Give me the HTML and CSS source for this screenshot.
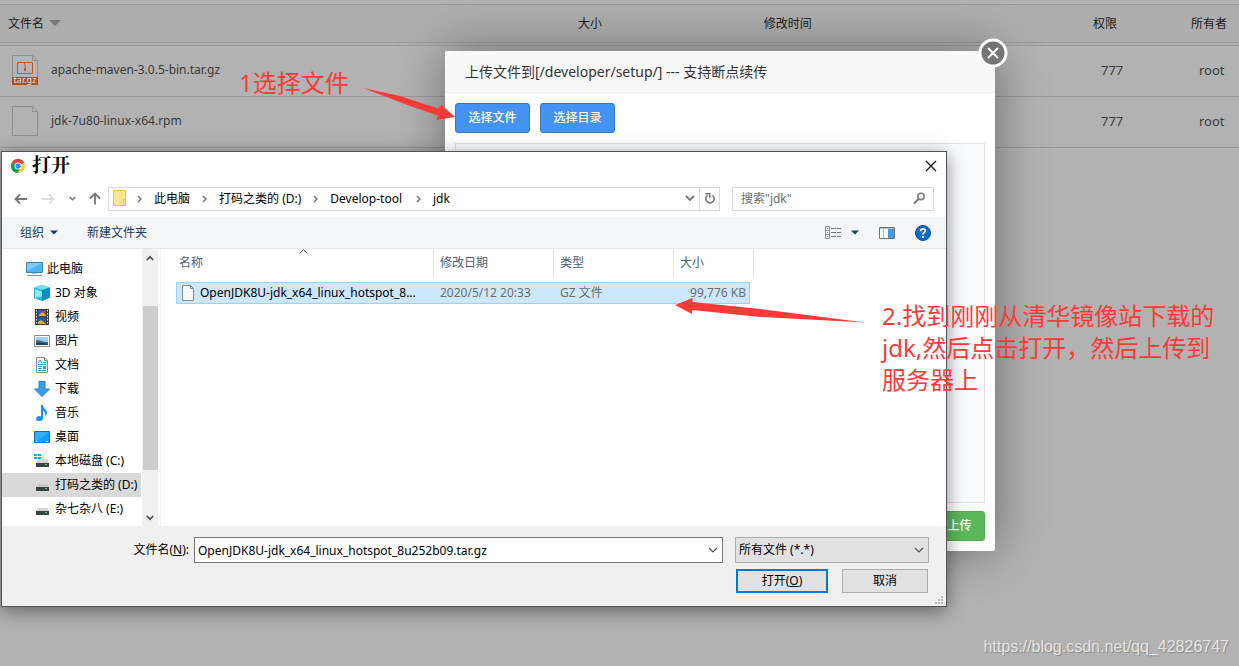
FILE: index.html
```html
<!DOCTYPE html>
<html lang="zh-CN">
<head>
<meta charset="utf-8">
<title>上传文件</title>
<link rel="stylesheet" href="styles.css">
</head>
<body>
<main class="page">
  <table class="files">
    <colgroup><col class="c-name"><col class="c-size"><col><col class="c-perm"><col class="c-owner"></colgroup>
    <thead>
      <tr><th>文件名<svg class="caret" width="12" height="6" viewBox="0 0 12 6"><path d="M0 0h12L6 6z" fill="#777"/></svg></th><th>大小</th><th>修改时间</th><th>权限</th><th>所有者</th></tr>
      <tr class="rule"><td colspan="5"></td></tr>
    </thead>
    <tbody>
      <tr>
        <td><div class="file">
          <svg width="28" height="31" viewBox="0 0 28 31"><path d="M1.500.5h20l5 5v24h-25z" fill="#b5b5b5" stroke="#8f8f8f"/><path d="M21.500.5v5h5" fill="none" stroke="#8f8f8f"/><path d="M6.500 7.500h15v11h-15z" fill="none" stroke="#b65a2c"/><path d="M13 8h1v2h-1zM14 10h1v1h-1zM13 11h1v1h-1zM14 12h1v1h-1zM13 13h2v3h-2z" fill="#b65a2c"/><path d="M1 22h26v8H1z" fill="#ab4f1c"/><text x="14" y="28" text-anchor="middle" fill="#f0e4dc" class="ext">tar.gz</text></svg>
          <span>apache-maven-3.0.5-bin.tar.gz</span></div></td>
        <td></td><td></td><td>777</td><td>root</td>
      </tr>
      <tr>
        <td><div class="file">
          <svg width="28" height="31" viewBox="0 0 28 31"><path d="M1.500.5h20l5 5v24h-25z" fill="#b2b2b2" stroke="#8f8f8f"/><path d="M21.500.5v5h5" fill="none" stroke="#8f8f8f"/></svg>
          <span>jdk-7u80-linux-x64.rpm</span></div></td>
        <td></td><td></td><td>777</td><td>root</td>
      </tr>
    </tbody>
  </table>

  <section class="modal" aria-label="上传文件">
    <header class="modal-title">上传文件到[/developer/setup/] --- 支持断点续传</header>
    <button class="modal-close" aria-label="关闭"><svg width="30" height="30" viewBox="0 0 30 30"><circle cx="15" cy="15" r="13" fill="#757575" stroke="#fff" stroke-width="3"/><path d="M10.500 10.500l9 9M19.500 10.500l-9 9" stroke="#fff" stroke-width="2" stroke-linecap="round"/></svg></button>
    <div class="modal-body">
      <div class="modal-actions"><button class="btn blue">选择文件</button><button class="btn blue">选择目录</button></div>
      <div class="drop"></div>
      <button class="btn green">开始上传</button>
    </div>
  </section>

  <section class="dialog" aria-label="打开">
    <header class="titlebar">
      <svg width="14" height="14" viewBox="0 0 14 14"><circle cx="7" cy="7" r="7" fill="#fbc93d"/><path d="M7 7L.9 3.500A7 7 0 0 1 13.100 3.600z" fill="#db4437"/><path d="M7 7L.9 3.500A7 7 0 0 0 6.500 14L9.500 8.500z" fill="#0f9d58"/><circle cx="7" cy="7" r="3.500" fill="#fff"/><circle cx="7" cy="7" r="2.700" fill="#4285f4"/></svg>
      <h1>打开</h1>
      <button class="plain" aria-label="关闭"><svg width="12" height="12" viewBox="0 0 12 12"><path d="M1 1l10 10M11 1L1 11" stroke="#111" stroke-width="1.200"/></svg></button>
    </header>
    <div class="navrow">
      <div class="arrows">
        <button class="plain" aria-label="后退"><svg width="14" height="12" viewBox="0 0 14 12"><path d="M1.500 6H13M6 1.500L1.500 6 6 10.500" fill="none" stroke="#777" stroke-width="1.800"/></svg></button>
        <button class="plain" aria-label="前进"><svg width="14" height="12" viewBox="0 0 14 12"><path d="M12.500 6H1M8 1.500L12.500 6 8 10.500" fill="none" stroke="#ddd" stroke-width="1.800"/></svg></button>
        <button class="plain" aria-label="最近"><svg width="7" height="5" viewBox="0 0 7 5"><path d="M.7 1l2.800 2.800L6.300 1" fill="none" stroke="#777" stroke-width="1.500"/></svg></button>
        <button class="plain" aria-label="向上"><svg width="12" height="13" viewBox="0 0 12 13"><path d="M6 12.500V2M1 6.500L6 1.500l5 5" fill="none" stroke="#777" stroke-width="1.800"/></svg></button>
      </div>
      <nav class="address">
        <svg class="folder" width="14" height="17" viewBox="0 0 14 17"><path d="M.5.500h12v15h-12z" fill="#ffe594" stroke="#eac04d"/><path d="M10.500 15.500h2v-6h-2z" fill="#ffe594" stroke="#eac04d"/></svg>
        <svg class="sep" width="5" height="8" viewBox="0 0 5 8"><path d="M1 1l3 3-3 3" fill="none" stroke="#777" stroke-width="1.500"/></svg>
        <a href="#">此电脑</a>
        <svg class="sep" width="5" height="8" viewBox="0 0 5 8"><path d="M1 1l3 3-3 3" fill="none" stroke="#777" stroke-width="1.500"/></svg>
        <a href="#">打码之类的 (D:)</a>
        <svg class="sep" width="5" height="8" viewBox="0 0 5 8"><path d="M1 1l3 3-3 3" fill="none" stroke="#777" stroke-width="1.500"/></svg>
        <a href="#">Develop-tool</a>
        <svg class="sep" width="5" height="8" viewBox="0 0 5 8"><path d="M1 1l3 3-3 3" fill="none" stroke="#777" stroke-width="1.500"/></svg>
        <a href="#">jdk</a>
        <button class="plain history" aria-label="历史"><svg width="10" height="7" viewBox="0 0 10 7"><path d="M1 1l4 4 4-4" fill="none" stroke="#777" stroke-width="1.900"/></svg></button>
        <button class="plain refresh" aria-label="刷新"><svg width="12" height="13" viewBox="0 0 12 13"><path d="M8.500 3.300A4.200 4.200 0 1 1 3.500 3.300" fill="none" stroke="#777" stroke-width="1.600"/><path d="M1.500 1.800h4.300v4" fill="none" stroke="#777" stroke-width="1.500"/></svg></button>
      </nav>
      <label class="search"><input type="text" placeholder='搜索"jdk"' aria-label="搜索"><svg width="13" height="13" viewBox="0 0 13 13"><circle cx="8" cy="4.500" r="3.200" fill="none" stroke="#777" stroke-width="1.500"/><path d="M5.500 7L1 11.500" stroke="#777" stroke-width="2"/></svg></label>
    </div>
    <div class="toolbar">
      <button class="plain">组织<svg width="8" height="5" viewBox="0 0 8 5"><path d="M0 .5h8L4 4.500z" fill="#1e395b"/></svg></button>
      <button class="plain">新建文件夹</button>
      <div class="tools">
        <button class="plain view" aria-label="更改视图"><svg width="17" height="13" viewBox="0 0 17 13"><path d="M.5.5h4v12h-4zM.5 4.500h4M.5 8.500h4" fill="#fff" stroke="#8c8c8c"/><path d="M2 2h1v1H2zM2 6h1v1H2z" fill="#2b6cb8"/><path d="M2 10h1v1H2z" fill="#d22"/><path d="M6 2.500h5M12 2.500h4M6 6.500h5M12 6.500h4M6 10.500h5M12 10.500h4" stroke="#777"/></svg><svg width="8" height="5" viewBox="0 0 8 5"><path d="M0 .5h8L4 4.500z" fill="#1e395b"/></svg></button>
        <button class="plain" aria-label="预览窗格"><svg width="16" height="12" viewBox="0 0 16 12"><path d="M.5.5h15v11H.5z" fill="#fff" stroke="#777"/><path d="M.5 1h15" stroke="#777"/><path d="M4.500 2v9" stroke="#bbb"/><path d="M9 2h6v9H9z" fill="#3f9be3"/></svg></button>
        <button class="plain" aria-label="帮助"><svg width="16" height="16" viewBox="0 0 16 16"><circle cx="8" cy="8" r="7.500" fill="#0a6ccb" stroke="#064a91"/><path d="M5.700 6.200c0-3.200 4.600-2.900 4.600-.4C10.300 7.400 8 7.500 8 9.500" fill="none" stroke="#fff" stroke-width="1.700"/><path d="M7 11h2v2H7z" fill="#fff"/></svg></button>
      </div>
    </div>
    <div class="browser">
      <ul class="tree">
        <li class="root"><a href="#"><svg width="17" height="16" viewBox="0 0 17 16"><path d="M.5 1.500h16v10H.5z" fill="#4db5f5" stroke="#3a86b5"/><path d="M1 2h15L1 10z" fill="#7accff"/><path d="M6 12h5v1H6z" fill="#b8c4ce"/><path d="M1 14.500h15" stroke="#8796a5"/></svg>此电脑</a></li>
        <li><a href="#"><svg width="16" height="16" viewBox="0 0 16 16"><path d="M8 0l8 2.500v10L8 16l-8-3V2.500z" fill="#28b5cf"/><path d="M8 0l8 2.500L8 5 0 2.500z" fill="#6fe0ee"/><path d="M8 5l8-2.500v10L8 16z" fill="#0c8fbe"/><path d="M1 4l7 2.500v5L1 13z" fill="#8be9ef"/></svg>3D 对象</a></li>
        <li><a href="#"><svg width="16" height="16" viewBox="0 0 16 16"><path d="M1 0h14v16H1z" fill="#3c3c3c"/><path d="M4 1h8v6.500H4zM4 8.500h8V15H4z" fill="#3157b5"/><path d="M5 6l3-3 4 3v1H5zM4 13l3-2 5 4H4z" fill="#dfb22d"/><path d="M8 2h3v2H8z" fill="#d44a35"/><path d="M2.500 1v15M13.500 1v15" stroke="#eee" stroke-dasharray="1.500 1.500"/></svg>视频</a></li>
        <li><a href="#"><svg width="16" height="16" viewBox="0 0 16 16"><path d="M.5 2.500h15v11H.5z" fill="#fff" stroke="#8a8a8a"/><path d="M2 4h12v8H2z" fill="#9cd3f4"/><path d="M2 7c4 0 7 2 12 2v3H2z" fill="#3f7186"/><path d="M2 10c5-1 8 0 12 1v1H2z" fill="#223f66"/></svg>图片</a></li>
        <li><a href="#"><svg width="16" height="16" viewBox="0 0 16 16"><path d="M2.500.5h8l3 3v12h-11z" fill="#fff" stroke="#8a8a8a"/><path d="M10.500.5v3h3" fill="none" stroke="#8a8a8a"/><path d="M4 6l2-3 2 3M9 5.500h3M4 7.500h8M4 9.500h4M4 11.500h4M4 13.500h8" fill="none" stroke="#249bd7"/><path d="M9 9h3v3H9z" fill="#5d9a83"/></svg>文档</a></li>
        <li><a href="#"><svg width="16" height="16" viewBox="0 0 16 16"><path d="M5 .5h6V8h4.500L8 15.500.5 8H5z" fill="#3d9ae8" stroke="#2780c7"/></svg>下载</a></li>
        <li><a href="#"><svg width="16" height="16" viewBox="0 0 16 16"><path d="M7 0h2c0 4 4 4 4 7.500 0 2-1 3-2 4 1-4-1-5.500-2-6V13c0 4-7 4-7 1 0-2.500 3-3.500 5-2.500z" fill="#1295f1"/></svg>音乐</a></li>
        <li><a href="#"><svg width="16" height="16" viewBox="0 0 16 16"><path d="M.5 2.500h15v11H.5z" fill="#159dfb" stroke="#0870bb"/><path d="M1 3h14L3 12H1z" fill="#36adff"/><path d="M2 12.500h1M12 12.500h2" stroke="#d5efff"/></svg>桌面</a></li>
        <li><a href="#"><svg width="16" height="16" viewBox="0 0 16 16"><path d="M4 6h9l2 4H2z" fill="#d0d2d4"/><path d="M0 1h3v2H0zM4 1h3v2H4zM0 4h3v2H0zM4 4h3v2H4z" fill="#00adef"/><path d="M2 10h13v4H2z" fill="#3f4242"/><path d="M11 11h2v1h-2z" fill="#50e35b"/></svg>本地磁盘 (C:)</a></li>
        <li class="current"><a href="#"><svg width="16" height="16" viewBox="0 0 16 16"><path d="M4 7h9l2 3H2z" fill="#c4c6ca"/><path d="M2 10h13v4H2z" fill="#3f4242"/><path d="M11 11h2v1h-2z" fill="#50e35b"/></svg>打码之类的 (D:)</a></li>
        <li><a href="#"><svg width="16" height="16" viewBox="0 0 16 16"><path d="M4 7h9l2 3H2z" fill="#d0d2d4"/><path d="M2 10h13v4H2z" fill="#3f4242"/><path d="M11 11h2v1h-2z" fill="#50e35b"/></svg>杂七杂八 (E:)</a></li>
      </ul>
      <div class="scroll">
        <svg width="8" height="6" viewBox="0 0 8 6"><path d="M.8 5L4 1.800 7.200 5" fill="none" stroke="#505050" stroke-width="1.700"/></svg>
        <div class="thumb"></div>
        <svg width="8" height="6" viewBox="0 0 8 6"><path d="M.8 1L4 4.200 7.200 1" fill="none" stroke="#505050" stroke-width="1.700"/></svg>
      </div>
      <div class="list">
        <table class="entries">
          <colgroup><col class="e-name"><col class="e-mid"><col class="e-mid"><col class="e-size"><col class="e-end"></colgroup>
          <thead><tr><th>名称<svg class="sorted" width="9" height="5" viewBox="0 0 9 5"><path d="M.7 4.300L4.500.8l3.800 3.500" fill="none" stroke="#555"/></svg></th><th>修改日期</th><th>类型</th><th colspan="2">大小</th></tr></thead>
          <tbody><tr>
            <td><div class="entry"><svg width="12" height="16" viewBox="0 0 12 16"><path d="M.5.5h8l3 3v12H.5z" fill="#f9f9f9" stroke="#8a8a8a"/><path d="M8.500.5v3h3" fill="none" stroke="#8a8a8a"/></svg><span>OpenJDK8U-jdk_x64_linux_hotspot_8...</span></div></td>
            <td>2020/5/12 20:33</td><td>GZ 文件</td><td>99,776 KB</td><td></td>
          </tr></tbody>
        </table>
      </div>
    </div>
    <footer class="footer">
      <label for="fname">文件名(<u>N</u>):</label>
      <div class="combo"><input id="fname" type="text" value="OpenJDK8U-jdk_x64_linux_hotspot_8u252b09.tar.gz"><svg width="10" height="6" viewBox="0 0 10 6"><path d="M1 1l4 4 4-4" fill="none" stroke="#555" stroke-width="1.200"/></svg></div>
      <div class="combo filter"><select aria-label="文件类型"><option>所有文件 (*.*)</option></select><svg width="10" height="6" viewBox="0 0 10 6"><path d="M1 1l4 4 4-4" fill="none" stroke="#555" stroke-width="1.200"/></svg></div>
      <div class="confirm"><button class="win primary">打开(<u>O</u>)</button><button class="win">取消</button></div>
      <svg class="grip" width="8" height="8" viewBox="0 0 8 8"><path d="M6 0h2v2H6zM6 3h2v2H6zM6 6h2v2H6zM3 3h2v2H3zM3 6h2v2H3zM0 6h2v2H0z" fill="#b8b8b8"/></svg>
    </footer>
  </section>

  <svg class="pointers" width="880" height="330" viewBox="0 0 880 330"><path d="M363 88L400 96 438 108.500 441.500 105 455 117 436.500 120 438 115.500 410 106zM675 305L692.500 298 692.500 302 760 309 865 322.500 760 317 692 310 692 314z" fill="#fc3a38"/></svg>
  <p class="note first">1选择文件</p>
  <p class="note second">2.找到刚刚从清华镜像站下载的<br>jdk,然后点击打开，然后上传到<br>服务器上</p>
  <p class="watermark">https://blog.csdn.net/qq_42826747</p>
</main>
</body>
</html>
```

FILE: styles.css
```css
* { box-sizing: border-box; }
body { margin: 0; background: #b2b2b2; font: 12px/16px "Noto Sans", "Noto Sans CJK SC", sans-serif; color: #111; }
button, input, select { font: inherit; color: inherit; margin: 0; }
a { color: inherit; text-decoration: none; }
svg { display: block; flex: none; }
.page { position: relative; min-height: 100vh; padding-top: 4px; overflow: hidden; }
.plain { display: flex; align-items: center; padding: 0; border: 0; background: none; }

.files { width: 100%; table-layout: fixed; border-collapse: separate; border-spacing: 0; color: #3a3a3a; }
.c-name { width: 46%; }
.c-size { width: 15%; }
.c-perm { width: 98px; }
.c-owner { width: 56px; }
.files th { height: 39px; padding: 0 0 0 8px; border: solid #999; border-width: 1px 0; background: #adadad; color: #1c1c1c; font-weight: 400; text-align: left; white-space: nowrap; }
.files .rule td { height: 3px; padding: 0; border-bottom: 1px solid #999; }
.files tbody td { height: 51px; padding: 0 0 2px 16px; border-bottom: 1px solid #999; font-size: 13px; }
.files tbody td:first-child { padding-left: 11px; font-size: 12px; }
.caret { display: inline-block; margin-left: 5px; vertical-align: 2px; }
.file { display: flex; align-items: center; gap: 12px; }
.ext { font: 9px "Noto Sans", sans-serif; }

.modal { position: absolute; left: 445px; top: 51px; width: 550px; background: #fff; border-radius: 2px; box-shadow: 1px 1px 50px rgba(0, 0, 0, .4); }
.modal-title { padding: 0 20px; border-bottom: 1px solid #eee; border-radius: 2px 2px 0 0; background: #f8f8f8; color: #333; font-size: 14px; line-height: 41px; }
.modal-close { position: absolute; right: -13px; top: -13px; padding: 0; border: 0; background: none; }
.modal-body { display: flex; flex-direction: column; gap: 8px; padding: 10px; }
.modal-actions { display: flex; gap: 10px; padding-bottom: 2px; }
.btn { min-width: 75px; height: 30px; padding: 0 12px; border: 1px solid #2f7fc0; border-radius: 3px; background: #4492f2; color: #fff; font-weight: 500; }
.green { align-self: flex-end; border-color: #4cae4c; background: #5cb85c; }
.drop { height: 360px; border: 1px solid #e2e2e6; background: #fafbff; }

.dialog { position: absolute; left: 1px; top: 151px; width: 946px; border: 1px solid #555; background: #fff; box-shadow: 0 4px 18px rgba(0, 0, 0, .45); }
.titlebar { display: flex; align-items: center; gap: 7px; height: 28px; padding: 0 9px; }
.titlebar h1 { flex: 1; margin: 0; font: 700 19px/28px "Liberation Serif", "Noto Serif CJK SC", "Noto Sans CJK SC", serif; color: #000; }
.navrow { display: flex; align-items: center; gap: 12px; height: 37px; padding: 0 12px; }
.arrows { display: flex; align-items: center; justify-content: space-between; width: 87px; }
.address { display: flex; flex: 1; align-items: center; height: 24px; margin-left: -5px; padding-left: 4px; border: 1px solid #d9d9d9; color: #000; }
.address a { margin: 0 12px; }
.address a:last-of-type { margin-left: 12px; }
.address a:nth-of-type(3) { margin-right: 14px; }
.folder + .sep { margin-left: 10px; }
.history { margin-left: auto; padding-right: 4px; }
.refresh { justify-content: center; width: 20px; height: 22px; border-left: 1px solid #d9d9d9; }
.search { display: flex; align-items: center; width: 202px; height: 24px; padding: 0 7px; border: 1px solid #d9d9d9; }
.search input { flex: 1; min-width: 0; padding: 0 1px; border: 0; outline: 0; background: none; }
.search input::placeholder { color: #6d6d6d; opacity: 1; }
.toolbar { display: flex; align-items: center; gap: 29px; height: 32px; padding: 0 15px 0 18px; border-bottom: 1px solid #e3e7ea; background: #f5f6f7; color: #1e395b; }
.toolbar .plain { gap: 6px; }
.tools { display: flex; align-items: center; gap: 20px; margin-left: auto; }
.toolbar .view { gap: 9px; }

.browser { display: flex; height: 277px; }
.tree { width: 139px; margin: 0; padding: 8px 0 0; list-style: none; color: #000; }
.tree a { display: flex; align-items: center; gap: 5px; height: 24px; padding-left: 32px; white-space: nowrap; }
.tree .root a { padding-left: 24px; gap: 4px; }
.current { background: #d9d9d9; }
.scroll { display: flex; flex-direction: column; align-items: center; width: 16px; margin-left: 1px; padding: 6px 0 5px; background: #f0f0f0; }
.thumb { width: 15px; height: 164px; margin: 45px 0 auto; background: #cdcdcd; }
.list { flex: 1; margin-left: 2px; padding-left: 15px; border-left: 1px solid #f3f3f3; }
.entries { width: 578px; table-layout: fixed; border-collapse: separate; border-spacing: 0; color: #6d6d6d; }
.e-name { width: 258px; }
.e-mid { width: 120px; }
.e-size { width: 76px; }
.e-end { width: 4px; }
.entries th { position: relative; height: 28px; padding: 0 0 0 6px; border-right: 1px solid #e5e5e5; color: #4c607a; font-weight: 400; text-align: left; }
.entries th:first-child { padding-left: 3px; }
.sorted { position: absolute; left: 123px; top: 0; }
.entries tbody::before { display: block; height: 5px; content: ""; }
.entries td { height: 22px; padding: 0 0 0 6px; border: solid #99d1ff; border-width: 1px 0; background: #cce8ff; white-space: nowrap; }
.entries td:first-child { border-left-width: 1px; padding-left: 5px; }
.entries td:nth-child(4) { padding: 0 3px 0 0; border-right-width: 1px; text-align: right; }
.entries td:last-child { padding: 0; border: 0; background: none; }
.entry { display: flex; align-items: center; gap: 6px; color: #000; }

.footer { position: relative; display: grid; grid-template-columns: 187px 1fr 194px; align-items: center; column-gap: 0; row-gap: 6px; padding: 11px 17px 13px 0; background: #f0f0f0; color: #000; }
.footer label { text-align: right; }
.combo { display: flex; align-items: center; height: 26px; margin: 0 12px 0 5px; padding-right: 4px; border: 1px solid #777; background: #fff; }
.combo input, .combo select { flex: 1; min-width: 0; height: 24px; padding: 0 3px; border: 0; outline: 0; background: none; appearance: none; }
.filter { margin: 0; border-color: #adadad; background: #e1e1e1; }
.confirm { grid-column: 2 / 4; display: flex; justify-content: flex-end; gap: 14px; padding-right: 1px; }
.win { width: 86px; height: 24px; padding: 0; border: 1px solid #adadad; background: #e1e1e1; }
.primary { width: 92px; border: 2px solid #0078d7; }
.grip { position: absolute; right: 3px; bottom: 2px; }

.pointers { position: absolute; left: 0; top: 0; pointer-events: none; }
.note { position: absolute; margin: 0; color: #fc3a38; font-size: 24px; line-height: 32px; white-space: nowrap; }
.first { left: 239px; top: 67px; }
.second { left: 882px; top: 300px; }
.watermark { position: absolute; right: 10px; bottom: 9px; margin: 0; color: #e4e4e4; font: 16px/20px "Liberation Sans", Arial, sans-serif; text-shadow: 1px 1px 1px #888; }
```
